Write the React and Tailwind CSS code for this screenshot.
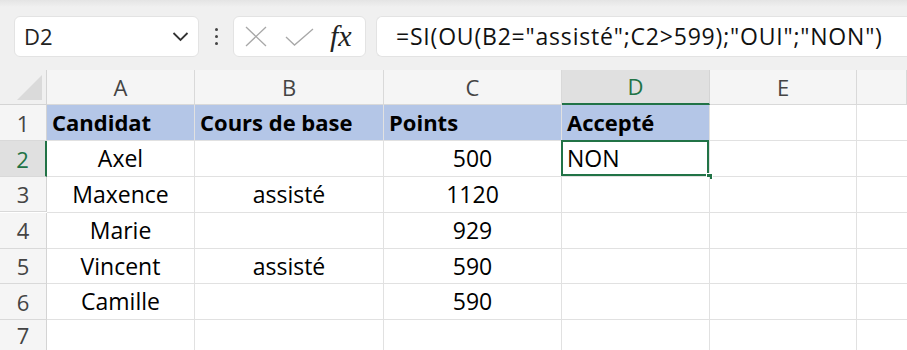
import React from "react";

const cols = ["A", "B", "C", "D", "E", ""];

const rows = [
  { n: 1, cells: ["Candidat", "Cours de base", "Points", "Accepté"], head: true },
  { n: 2, cells: ["Axel", "", "500", "NON"] },
  { n: 3, cells: ["Maxence", "assisté", "1120", ""] },
  { n: 4, cells: ["Marie", "", "929", ""] },
  { n: 5, cells: ["Vincent", "assisté", "590", ""] },
  { n: 6, cells: ["Camille", "", "590", ""] },
  { n: 7, cells: ["", "", "", ""] },
];

const rowHeights = ["h-[36px]", "h-[36px]", "h-[35px]", "h-[36px]", "h-[35px]", "h-[36px]", "h-[31px]"];

function FormulaBar() {
  return (
    <div className="h-[70px] flex items-start pt-[16px] pl-[14px] gap-[10px] bg-gradient-to-b from-[#e4e4e4] via-[#f0f0f0] via-10% to-[#f0f0f0]">
      <div className="w-[185px] h-[41px] bg-white rounded-[6px] border border-[#e3e3e3] flex items-center justify-between pl-[9px] pr-[9px]">
        <span className="text-[22px] text-[#222]">D2</span>
        <svg width="17" height="11" viewBox="0 0 17 11" fill="none">
          <path d="M1.5 2 L8.5 9 L15.5 2" stroke="#333" strokeWidth="1.8" />
        </svg>
      </div>
      <div className="w-[14px] h-[41px] flex flex-col items-center justify-center gap-[4px]">
        <div className="w-[3px] h-[3px] bg-[#444] rounded-full" />
        <div className="w-[3px] h-[3px] bg-[#444] rounded-full" />
        <div className="w-[3px] h-[3px] bg-[#444] rounded-full" />
      </div>
      <div className="w-[133px] h-[41px] bg-white rounded-[6px] border border-[#e3e3e3] flex items-center pl-[11px] gap-[18px]">
        <svg width="22" height="21" viewBox="0 0 22 21" fill="none">
          <path d="M1 1 L21 20 M21 1 L1 20" stroke="#a8a8a8" strokeWidth="1.3" />
        </svg>
        <svg width="29" height="18" viewBox="0 0 29 18" fill="none">
          <path d="M1 9 L9.5 17 L28 1" stroke="#a8a8a8" strokeWidth="1.3" />
        </svg>
        <span className="text-[30px] italic leading-none text-[#222] font-['Liberation_Serif',serif] -ml-[2px] -mt-[2px]">fx</span>
      </div>
      <div className="flex-1 h-[41px] bg-white rounded-l-[6px] border border-r-0 border-[#e3e3e3] flex items-center pl-[19px] whitespace-nowrap overflow-hidden">
        <span className="text-[23px] tracking-[0.8px] text-[#111]">=SI(OU(B2="assisté";C2&gt;599);"OUI";"NON")</span>
      </div>
    </div>
  );
}

function Cell({ text, col, row, head }) {
  const selected = col === 3 && row === 2;
  const align = head || col === 3 ? "justify-start pl-[5px]" : "justify-center";
  const fill = head && col < 4 ? "bg-[#b4c6e7]" : "bg-white";
  return (
    <div
      className={`relative flex items-center border-r border-b border-[#e1e1e1] ${align} ${fill} ${
        head ? "font-bold text-[22px]" : "text-[23px]"
      }`}
    >
      {selected && (
        <>
          <div className="absolute -left-[1px] -top-[1px] right-0 bottom-0 border-2 border-[#217346]" />
          <div className="absolute -right-[4px] -bottom-[4px] w-[7px] h-[7px] bg-[#217346] border border-white" />
        </>
      )}
      <span className="relative">{text}</span>
    </div>
  );
}

export default function App() {
  return (
    <div className="w-[907px] h-[350px] overflow-hidden bg-white font-['Open_Sans',sans-serif] text-black">
      <FormulaBar />
      <div className="grid grid-cols-[47px_148px_189px_178px_148px_147px_1fr]">
        <div className="h-[35px] bg-[#f0f0f0] border-r border-b border-[#d4d4d4] flex items-end justify-end pr-[4px] pb-[4px]">
          <svg width="25" height="25" viewBox="0 0 25 25">
            <path d="M25 0 L25 25 L0 25 Z" fill="#dadada" />
          </svg>
        </div>
        {cols.map((c, i) => (
          <div
            key={i}
            className={`h-[35px] flex items-center justify-center text-[22px] ${
              i === 3
                ? "bg-[#e0e0e0] text-[#217346] border-b-2 border-b-[#217346] border-r border-r-[#d4d4d4]"
                : "bg-[#f5f5f5] text-[#444] border-r border-b border-[#d9d9d9]"
            }`}
          >
            {c}
          </div>
        ))}
        {rows.map((r, ri) => (
          <React.Fragment key={r.n}>
            <div
              className={`${rowHeights[ri]} flex items-center justify-center text-[22px] leading-none border-b border-[#d9d9d9] ${
                r.n === 2
                  ? "bg-[#e0e0e0] text-[#217346] border-r-2 border-r-[#217346]"
                  : "bg-[#f5f5f5] text-[#444] border-r border-r-[#d4d4d4]"
              }`}
            >
              {r.n}
            </div>
            {r.cells.map((t, ci) => (
              <Cell key={ci} text={t} col={ci} row={r.n} head={r.head} />
            ))}
            <div className="border-r border-b border-[#e1e1e1]" />
            <div className="border-b border-[#e1e1e1]" />
          </React.Fragment>
        ))}
      </div>
    </div>
  );
}
